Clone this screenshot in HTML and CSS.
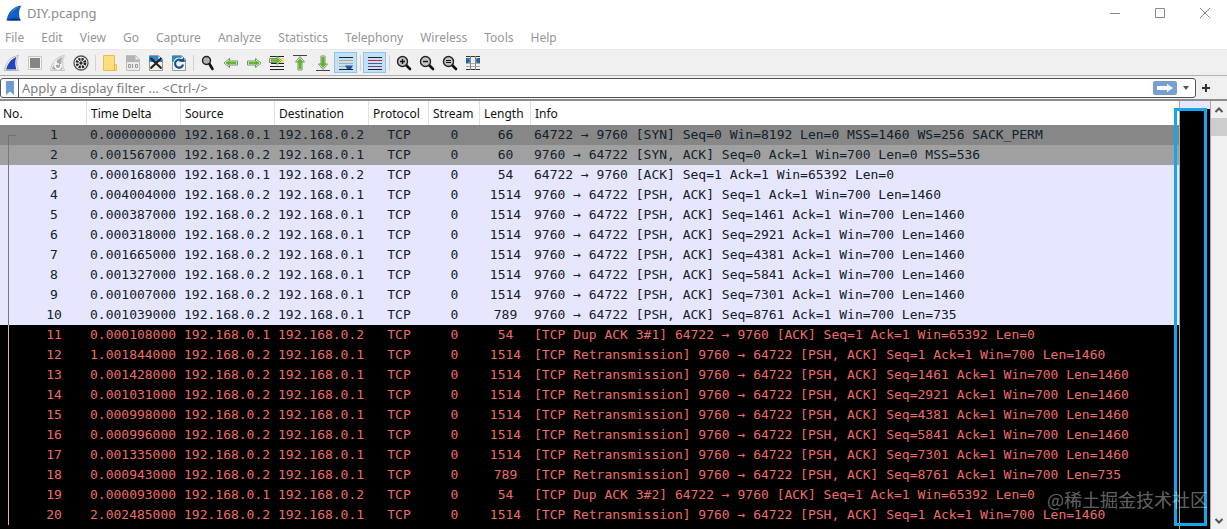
FILE: index.html
```html
<!DOCTYPE html>
<html lang="en">
<head>
  <meta charset="UTF-8">
  <title>DIY.pcapng</title>
  <link rel="stylesheet" href="styles.css">
</head>
<body>

  <header class="titlebar">
    <svg class="logo" width="16" height="16" viewBox="0 0 16 16">
      <path d="M0.500 15.500C2 7 7 1.500 15.500 .5C12.500 5 12.500 10 14.500 15.500Z" fill="#1260c4"/>
      <path d="M1 15.500C4 13 10 12.500 14.200 14L14.600 15.500Z" fill="#0a2f7c"/>
      <path d="M4 9C6 5 9 2.500 13 1.500C10 4 7 6 4 9Z" fill="#3c8ae6"/>
    </svg>
    <h1>DIY.pcapng</h1>
    <div class="window-buttons">
      <button aria-label="Minimize"><svg width="12" height="12"><path d="M1 6.500h10"/></svg></button>
      <button aria-label="Maximize"><svg width="12" height="12"><path d="M1.500 1.500h9v9h-9z"/></svg></button>
      <button aria-label="Close"><svg width="12" height="12"><path d="M1 1l10 10M11 1L1 11"/></svg></button>
    </div>
  </header>

  <nav class="menubar">
    <a href="#">File</a>
    <a href="#">Edit</a>
    <a href="#">View</a>
    <a href="#">Go</a>
    <a href="#">Capture</a>
    <a href="#">Analyze</a>
    <a href="#">Statistics</a>
    <a href="#">Telephony</a>
    <a href="#">Wireless</a>
    <a href="#">Tools</a>
    <a href="#">Help</a>
  </nav>

  <div class="toolbar">
    <button aria-label="Start capture"><svg width="16" height="16" viewBox="0 0 16 16"><path d="M.5 15.500C2 7 6 2 14.500 .5C12 5 12 10 14.500 15.500Z" fill="#fff" stroke="#b4b4b4"/><path d="M2 14.500C4 8 7 4 12.500 2C10.800 6 11 10.500 12.500 14.500Z" fill="#2545c0"/></svg></button>
    <button aria-label="Stop capture"><svg width="16" height="16" viewBox="0 0 16 16"><path d="M1.500 1.500h13v13h-13z" fill="#f4f4f4" stroke="#c8c8c8"/><path d="M3 3h10v10H3z" fill="#858585"/></svg></button>
    <button aria-label="Restart capture"><svg width="16" height="16" viewBox="0 0 16 16"><path d="M.5 15.500C2 7 6 2 14.500 .5C12 5 12 10 14.500 15.500Z" fill="#f4f4f4" stroke="#c4c4c4"/><path d="M2 14.500C4 8 7 4 12.500 2C10.800 6 11 10.500 12.500 14.500Z" fill="#a8a8a8"/><path d="M6 8.500A3 3 0 1 0 10.500 9M6 6v3h3" fill="none" stroke="#fff" stroke-width="1.500"/></svg></button>
    <button aria-label="Capture options"><svg width="16" height="16" viewBox="0 0 16 16"><circle cx="8" cy="8" r="7" fill="#fff" stroke="#555" stroke-width="1.300"/><circle cx="8" cy="8" r="4" fill="none" stroke="#222" stroke-width="2.800" stroke-dasharray="2.200 .94"/><circle cx="8" cy="8" r="1.700" fill="#222"/></svg></button>
    <span class="sep"></span>
    <button aria-label="Open"><svg width="16" height="16" viewBox="0 0 16 16"><path d="M1.500 .5h11v9h2v6h-13z" fill="#fddf80" stroke="#e8c050"/><path d="M12.500 9.500v6" stroke="#e0b040"/></svg></button>
    <button aria-label="Save"><svg width="16" height="16" viewBox="0 0 16 16"><path d="M1.500 .5h9l4 4v11h-13z" fill="#ececec" stroke="#bbb"/><path d="M1 1h9.500v3.500h4V7H1z" fill="#b4b4b4"/><path d="M3.500 9.500h2v3h-2zM7.500 9v4M10.500 9.500h2v3h-2z" fill="none" stroke="#999"/></svg></button>
    <button aria-label="Close file"><svg width="16" height="16" viewBox="0 0 16 16"><path d="M1.500 .5h9l4 4v11h-13z" fill="#f5f5e8" stroke="#99a"/><path d="M1 1h9.500v3.500h4V7H1z" fill="#2e86c4"/><path d="M2.500 3l11 10.500M13.500 3l-11 10.500" stroke="#222" stroke-width="2.200"/></svg></button>
    <button aria-label="Reload file"><svg width="16" height="16" viewBox="0 0 16 16"><path d="M1.500 .5h9l4 4v11h-13z" fill="#f5f5e8" stroke="#99a"/><path d="M1 1h9.500v3.500h4V7H1z" fill="#2e86c4"/><path d="M10.500 5.500A4 4 0 1 0 12 9.500" fill="none" stroke="#fff" stroke-width="4"/><path d="M10.500 5.500A4 4 0 1 0 12 9.500" fill="none" stroke="#174c90" stroke-width="2.200"/><path d="M8 6.500h5v-4z" fill="#174c90"/></svg></button>
    <span class="sep"></span>
    <button aria-label="Find"><svg width="16" height="16" viewBox="0 0 16 16"><circle cx="6.500" cy="5.500" r="4" fill="#b0b0b0" stroke="#222" stroke-width="1.500"/><path d="M9.500 9l3 5" stroke="#111" stroke-width="2.600" stroke-linecap="round"/></svg></button>
    <button aria-label="Go back"><svg width="16" height="16" viewBox="0 0 16 16"><path class="halo" d="M1 8l5.500-4.500v2.500H14.500v4H6.500v2.500z"/><path class="green" d="M3 8l3-2v1.300h7v1.400H6V10z"/></svg></button>
    <button aria-label="Go forward"><svg width="16" height="16" viewBox="0 0 16 16"><path class="halo" d="M15 8L9.500 3.500v2.500H1.500v4h8v2.500z"/><path class="green" d="M13 8l-3-2v1.300H3v1.400h7V10z"/></svg></button>
    <button aria-label="Go to packet"><svg width="16" height="16" viewBox="0 0 16 16"><path d="M1 1.500h14M1 11.500h14M1 14.500h14" stroke="#222"/><path d="M11 3h4v5h-4z" fill="#f6e36c"/><path d="M2 8.500h13" stroke="#222"/><path class="halo" d="M12.500 5.500L8 1.500v2H.5v4H8v2z"/><path class="green" d="M11 5.500l-3-2v1.300H2v1.400h6v1.300z"/></svg></button>
    <button aria-label="First packet"><svg width="16" height="16" viewBox="0 0 16 16"><path d="M1 .5h14" stroke="#444"/><path class="halo" d="M8 1.500l4.500 5.500H10v8H6V7H3.500z"/><path class="green" d="M8 3.500L10.500 7H9v6.500H7V7H5.500z"/></svg></button>
    <button aria-label="Last packet"><svg width="16" height="16" viewBox="0 0 16 16"><path d="M1 15.500h14" stroke="#444"/><path class="halo" d="M8 14.500L3.500 9H6V1h4v8h2.500z"/><path class="green" d="M8 12.500L5.500 9H7V2.500h2V9h1.500z"/></svg></button>
    <button class="checked" aria-label="Auto scroll"><svg width="16" height="16" viewBox="0 0 16 16"><path d="M1 2.500h14M1 14.500h14" stroke="#222"/><path d="M1 5.500h14M1 8.500h14M1 11.500h8" stroke="#a9b09c"/><path d="M7 10.500h8l-2 3.500h-4z" fill="#2453a8"/></svg></button>
    <span class="sep"></span>
    <button class="checked" aria-label="Colorize"><svg width="16" height="16" viewBox="0 0 16 16"><path d="M1 2.500h14M1 14.500h14" stroke="#222"/><path d="M1 5.500h14" stroke="#d22"/><path d="M1 8.500h14" stroke="#3c5fb0"/><path d="M1 11.500h14" stroke="#75457f"/></svg></button>
    <span class="sep"></span>
    <button aria-label="Zoom in"><svg width="16" height="16" viewBox="0 0 16 16"><path d="M9.500 9.500l4.500 4.500" stroke="#111" stroke-width="2.600" stroke-linecap="round"/><circle cx="6.500" cy="6.500" r="5" fill="#c4c4c4" stroke="#222" stroke-width="1.400"/><path d="M4 6.500h5M6.500 4v5" stroke="#111" stroke-width="1.400"/></svg></button>
    <button aria-label="Zoom out"><svg width="16" height="16" viewBox="0 0 16 16"><path d="M9.500 9.500l4.500 4.500" stroke="#111" stroke-width="2.600" stroke-linecap="round"/><circle cx="6.500" cy="6.500" r="5" fill="#c4c4c4" stroke="#222" stroke-width="1.400"/><path d="M4 6.500h5" stroke="#111" stroke-width="1.400"/></svg></button>
    <button aria-label="Normal size"><svg width="16" height="16" viewBox="0 0 16 16"><path d="M9.500 9.500l4.500 4.500" stroke="#111" stroke-width="2.600" stroke-linecap="round"/><circle cx="6.500" cy="6.500" r="5" fill="#c4c4c4" stroke="#222" stroke-width="1.400"/><path d="M4 5.500h5M4 7.500h5" stroke="#111" stroke-width="1.100"/></svg></button>
    <button aria-label="Resize columns"><svg width="16" height="16" viewBox="0 0 16 16"><path d="M1 1.500h14M1 14.500h14" stroke="#333"/><path d="M1 11.500h14M1 8.500h14" stroke="#aaa"/><path d="M5.500 1v14M10.500 1v14" stroke="#888"/><path d="M1 3h2l2 2.500L3 8H1zM15 3h-2l-2 2.500L13 8h2z" fill="#2c62a4"/><path d="M1 3h4v5H1zM11 3h4v5h-4z" fill="#2c62a4" opacity=".7"/></svg></button>
  </div>

  <form class="filterbar">
    <div class="filter-box">
      <button type="button" class="bookmark" aria-label="Bookmarks"><svg width="10" height="14" viewBox="0 0 10 14"><path d="M1 0h8v14L5 10.500 1 14z" fill="#6f9bd0"/></svg></button>
      <input type="text" aria-label="Display filter" placeholder="Apply a display filter ... &lt;Ctrl-/&gt;">
      <button type="button" class="apply" aria-label="Apply"><svg width="24" height="14" viewBox="0 0 24 14"><path d="M4 5h10V3l6 4-6 4V9H4z" fill="#fff"/></svg></button>
      <button type="button" class="history" aria-label="Recent filters"><svg width="8" height="5" viewBox="0 0 8 5"><path d="M1 0h6L4 4z" fill="#555"/></svg></button>
    </div>
    <button type="button" class="add" aria-label="Add filter button"><svg width="10" height="10" viewBox="0 0 10 10"><path d="M5 1v8M1 5h8" stroke="#333" stroke-width="2"/></svg></button>
  </form>

  <main class="packets">
    <div class="packet-list">
      <table>
        <colgroup>
          <col class="w-no"><col class="w-addr"><col class="w-addr"><col class="w-addr">
          <col class="w-proto"><col class="w-num"><col class="w-num"><col>
        </colgroup>
        <thead>
          <tr><th>No.</th><th>Time Delta</th><th>Source</th><th>Destination</th><th>Protocol</th><th>Stream</th><th>Length</th><th>Info</th></tr>
        </thead>
        <tbody>
          <tr class="syn selected"><td>1</td><td>0.000000000</td><td>192.168.0.1</td><td>192.168.0.2</td><td>TCP</td><td>0</td><td>66</td><td>64722 → 9760 [SYN] Seq=0 Win=8192 Len=0 MSS=1460 WS=256 SACK_PERM</td></tr>
          <tr class="syn"><td>2</td><td>0.001567000</td><td>192.168.0.2</td><td>192.168.0.1</td><td>TCP</td><td>0</td><td>60</td><td>9760 → 64722 [SYN, ACK] Seq=0 Ack=1 Win=700 Len=0 MSS=536</td></tr>
          <tr><td>3</td><td>0.000168000</td><td>192.168.0.1</td><td>192.168.0.2</td><td>TCP</td><td>0</td><td>54</td><td>64722 → 9760 [ACK] Seq=1 Ack=1 Win=65392 Len=0</td></tr>
          <tr><td>4</td><td>0.004004000</td><td>192.168.0.2</td><td>192.168.0.1</td><td>TCP</td><td>0</td><td>1514</td><td>9760 → 64722 [PSH, ACK] Seq=1 Ack=1 Win=700 Len=1460</td></tr>
          <tr><td>5</td><td>0.000387000</td><td>192.168.0.2</td><td>192.168.0.1</td><td>TCP</td><td>0</td><td>1514</td><td>9760 → 64722 [PSH, ACK] Seq=1461 Ack=1 Win=700 Len=1460</td></tr>
          <tr><td>6</td><td>0.000318000</td><td>192.168.0.2</td><td>192.168.0.1</td><td>TCP</td><td>0</td><td>1514</td><td>9760 → 64722 [PSH, ACK] Seq=2921 Ack=1 Win=700 Len=1460</td></tr>
          <tr><td>7</td><td>0.001665000</td><td>192.168.0.2</td><td>192.168.0.1</td><td>TCP</td><td>0</td><td>1514</td><td>9760 → 64722 [PSH, ACK] Seq=4381 Ack=1 Win=700 Len=1460</td></tr>
          <tr><td>8</td><td>0.001327000</td><td>192.168.0.2</td><td>192.168.0.1</td><td>TCP</td><td>0</td><td>1514</td><td>9760 → 64722 [PSH, ACK] Seq=5841 Ack=1 Win=700 Len=1460</td></tr>
          <tr><td>9</td><td>0.001007000</td><td>192.168.0.2</td><td>192.168.0.1</td><td>TCP</td><td>0</td><td>1514</td><td>9760 → 64722 [PSH, ACK] Seq=7301 Ack=1 Win=700 Len=1460</td></tr>
          <tr><td>10</td><td>0.001039000</td><td>192.168.0.2</td><td>192.168.0.1</td><td>TCP</td><td>0</td><td>789</td><td>9760 → 64722 [PSH, ACK] Seq=8761 Ack=1 Win=700 Len=735</td></tr>
          <tr class="bad"><td>11</td><td>0.000108000</td><td>192.168.0.1</td><td>192.168.0.2</td><td>TCP</td><td>0</td><td>54</td><td>[TCP Dup ACK 3#1] 64722 → 9760 [ACK] Seq=1 Ack=1 Win=65392 Len=0</td></tr>
          <tr class="bad"><td>12</td><td>1.001844000</td><td>192.168.0.2</td><td>192.168.0.1</td><td>TCP</td><td>0</td><td>1514</td><td>[TCP Retransmission] 9760 → 64722 [PSH, ACK] Seq=1 Ack=1 Win=700 Len=1460</td></tr>
          <tr class="bad"><td>13</td><td>0.001428000</td><td>192.168.0.2</td><td>192.168.0.1</td><td>TCP</td><td>0</td><td>1514</td><td>[TCP Retransmission] 9760 → 64722 [PSH, ACK] Seq=1461 Ack=1 Win=700 Len=1460</td></tr>
          <tr class="bad"><td>14</td><td>0.001031000</td><td>192.168.0.2</td><td>192.168.0.1</td><td>TCP</td><td>0</td><td>1514</td><td>[TCP Retransmission] 9760 → 64722 [PSH, ACK] Seq=2921 Ack=1 Win=700 Len=1460</td></tr>
          <tr class="bad"><td>15</td><td>0.000998000</td><td>192.168.0.2</td><td>192.168.0.1</td><td>TCP</td><td>0</td><td>1514</td><td>[TCP Retransmission] 9760 → 64722 [PSH, ACK] Seq=4381 Ack=1 Win=700 Len=1460</td></tr>
          <tr class="bad"><td>16</td><td>0.000996000</td><td>192.168.0.2</td><td>192.168.0.1</td><td>TCP</td><td>0</td><td>1514</td><td>[TCP Retransmission] 9760 → 64722 [PSH, ACK] Seq=5841 Ack=1 Win=700 Len=1460</td></tr>
          <tr class="bad"><td>17</td><td>0.001335000</td><td>192.168.0.2</td><td>192.168.0.1</td><td>TCP</td><td>0</td><td>1514</td><td>[TCP Retransmission] 9760 → 64722 [PSH, ACK] Seq=7301 Ack=1 Win=700 Len=1460</td></tr>
          <tr class="bad"><td>18</td><td>0.000943000</td><td>192.168.0.2</td><td>192.168.0.1</td><td>TCP</td><td>0</td><td>789</td><td>[TCP Retransmission] 9760 → 64722 [PSH, ACK] Seq=8761 Ack=1 Win=700 Len=735</td></tr>
          <tr class="bad"><td>19</td><td>0.000093000</td><td>192.168.0.1</td><td>192.168.0.2</td><td>TCP</td><td>0</td><td>54</td><td>[TCP Dup ACK 3#2] 64722 → 9760 [ACK] Seq=1 Ack=1 Win=65392 Len=0</td></tr>
          <tr class="bad"><td>20</td><td>2.002485000</td><td>192.168.0.2</td><td>192.168.0.1</td><td>TCP</td><td>0</td><td>1514</td><td>[TCP Retransmission] 9760 → 64722 [PSH, ACK] Seq=1 Ack=1 Win=700 Len=1460</td></tr>
        </tbody>
      </table>
    </div>
    <div class="minimap"></div>
    <div class="scrollbar">
      <button aria-label="Scroll up"><svg width="10" height="8" viewBox="0 0 10 8"><path d="M1.500 6L5 2.500 8.500 6"/></svg></button>
      <div class="thumb"></div>
      <button aria-label="Scroll down"><svg width="10" height="8" viewBox="0 0 10 8"><path d="M1.500 2L5 5.500 8.500 2"/></svg></button>
    </div>
    <div class="highlight"></div>
    <span class="watermark">@稀土掘金技术社区</span>
  </main>

</body>
</html>
```
FILE: styles.css
```css
* { box-sizing: border-box; }
body { margin: 0; height: 100vh; display: flex; flex-direction: column; overflow: hidden; background: #fff; font: 12px "Noto Sans", sans-serif; }
button { display: flex; align-items: center; justify-content: center; padding: 0; border: 0; background: none; }
svg { display: block; }

/* title + menu */
.titlebar { display: flex; align-items: center; height: 25px; padding-left: 6px; }
.titlebar h1 { flex: 1; margin: 0 0 0 5px; font-size: 13px; font-weight: normal; color: #8c8c8c; }
.window-buttons { display: flex; }
.window-buttons button { width: 45px; height: 24px; }
.window-buttons path { fill: none; stroke: #888; }
.menubar { display: flex; align-items: flex-end; gap: 17px; height: 25px; padding: 0 5px; border-bottom: 1px solid #e8e8e8; }
.menubar a { color: #969696; text-decoration: none; line-height: 22px; }

/* toolbar */
.toolbar { display: flex; align-items: center; height: 26px; background: #f0f0f0; border-bottom: 1px solid #b0b0b0; }
.toolbar button { width: 23px; height: 21px; }
.toolbar .checked { background: #c4e0f7; border: 1px solid #90c4ee; }
.sep { width: 6px; height: 16px; background: linear-gradient(#d2d2d2, #d2d2d2) center / 1px 100% no-repeat; }
.halo { fill: #fff; stroke: #7d8a78; stroke-width: 1; }
.green { fill: #58b81a; stroke: #58b81a; stroke-width: 1; }

/* display filter */
.filterbar { display: flex; align-items: center; height: 25px; padding-top: 1px; background: #f0f0f0; border-bottom: 2px solid #8c8c8c; }
.filter-box { flex: 1; display: flex; align-items: center; height: 20px; border: 1px solid #555; border-radius: 3px; background: #fff; }
.bookmark { width: 18px; height: 18px; border-right: 1px solid #555; }
.filter-box input { flex: 1; min-width: 0; height: 18px; padding: 0 3px; border: 0; outline: 0; background: none; font: 13px "Noto Sans", sans-serif; }
.filter-box input::placeholder { color: #7d7d7d; }
.apply { width: 24px; height: 14px; border-radius: 2px; background: #779fd0; }
.history { width: 18px; height: 18px; }
.add { width: 20px; height: 20px; margin-right: 11px; }

/* packet list */
.packets { position: relative; flex: 1; display: flex; min-height: 0; }
.packet-list { flex: 1; min-width: 0; overflow: hidden; background: #000; }
table { width: 100%; table-layout: fixed; border-collapse: separate; border-spacing: 0; }
.w-no { width: 87px; }
.w-addr { width: 94px; }
.w-proto { width: 60px; }
.w-num { width: 51px; }
th { height: 24px; padding: 0 0 0 4px; background: #fff; border-right: 1px solid #e0e0e0; color: #111; font-weight: normal; text-align: left; white-space: nowrap; }
th:first-child { padding-left: 3px; }
th:last-child { border-right: 0; }
td { height: 20px; padding: 0 3px; font: 13px/20px "DejaVu Sans Mono", monospace; white-space: nowrap; }
tbody tr { background: #e7e6ff; color: #12202a; }
tbody .syn { background: #a0a0a0; }
tbody .selected { background: #878787; }
tbody .bad { background: #000; color: #ee6c68; }
td:nth-child(5), td:nth-child(6), td:nth-child(7) { text-align: center; }

/* related packet line in the No. column */
td:first-child { padding-left: 24px; text-align: center; background: linear-gradient(#77757f, #77757f) 8px 0 / 1px 100% no-repeat; }
.selected td:first-child { background: linear-gradient(#707070, #707070) 8px 10px / 1px 10px no-repeat, linear-gradient(#707070, #707070) 8px 10px / 8px 1px no-repeat; }
.bad td:first-child { background-image: linear-gradient(#d8b4b4, #d8b4b4); }

.minimap { width: 32px; border: solid #a8a8a8; border-width: 0 1px; background: linear-gradient(#e7e6ff 8px, #000 8px); }
.scrollbar { display: flex; flex-direction: column; width: 16px; background: #f0f0f0; }
.scrollbar button { height: 17px; }
.scrollbar path { fill: none; stroke: #555; stroke-width: 2; }
.thumb { height: 18px; margin-bottom: auto; background: #cdcdcd; }
.highlight { position: absolute; top: 7px; right: 20px; bottom: 3px; width: 33px; border: 3px solid #16a6ea; }
.watermark { position: absolute; right: 19px; bottom: 17px; color: rgba(255, 255, 255, .4); font: 18px/26px "Noto Sans CJK SC", sans-serif; }
```
